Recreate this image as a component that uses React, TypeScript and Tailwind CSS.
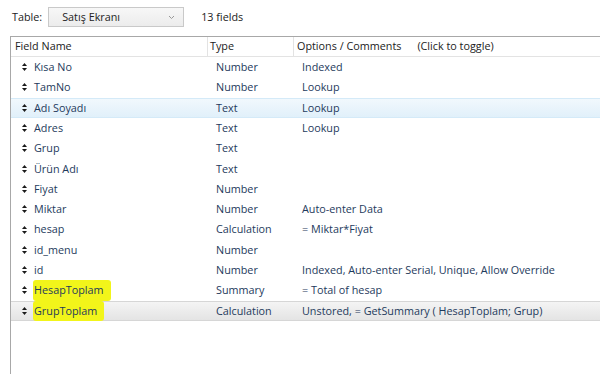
import React from 'react';

interface Field {
  name: string;
  type: string;
  options: string;
  state?: 'hover' | 'selected';
  mark?: boolean;
}

const fields: Field[] = [
  { name: 'Kısa No', type: 'Number', options: 'Indexed' },
  { name: 'TamNo', type: 'Number', options: 'Lookup' },
  { name: 'Adı Soyadı', type: 'Text', options: 'Lookup', state: 'hover' },
  { name: 'Adres', type: 'Text', options: 'Lookup' },
  { name: 'Grup', type: 'Text', options: '' },
  { name: 'Ürün Adı', type: 'Text', options: '' },
  { name: 'Fiyat', type: 'Number', options: '' },
  { name: 'Miktar', type: 'Number', options: 'Auto-enter Data' },
  { name: 'hesap', type: 'Calculation', options: '= Miktar*Fiyat' },
  { name: 'id_menu', type: 'Number', options: '' },
  { name: 'id', type: 'Number', options: 'Indexed, Auto-enter Serial, Unique, Allow Override' },
  { name: 'HesapToplam', type: 'Summary', options: '= Total of hesap', mark: true },
  { name: 'GrupToplam', type: 'Calculation', options: 'Unstored, = GetSummary ( HesapToplam; Grup)', state: 'selected', mark: true },
];

/** Small up/down drag handle shown before each field */
function Handle() {
  return (
    <svg width="5" height="8" viewBox="0 0 5 8" className="shrink-0">
      <path d="M2.5 0 L5 3 L0 3 Z" fill="#1a1a1a" />
      <path d="M0 5 L5 5 L2.5 8 Z" fill="#1a1a1a" />
    </svg>
  );
}

export default function App() {
  return (
    <div
      className="w-[600px] h-[374px] bg-white overflow-hidden text-[10.8px] text-[#1e3a5c]"
      style={{ fontFamily: '"Open Sans", "Noto Sans", sans-serif' }}
    >
      {/* Toolbar */}
      <div className="flex items-center h-[36px] pl-[12px] pb-[2px] text-[#222]">
        <span>Table:</span>
        <div className="ml-[6px] w-[136px] h-[20px] border border-[#c9c9c9] bg-gradient-to-b from-[#f7f7f7] to-[#ececec] flex items-center pl-[13px] pr-[8px]">
          <span className="flex-1">Satış Ekranı</span>
          <svg width="7" height="5" viewBox="0 0 7 5">
            <path d="M1 1 L3.5 3.5 L6 1" stroke="#999" strokeWidth="1" fill="none" />
          </svg>
        </div>
        <span className="ml-[17px]">13 fields</span>
      </div>

      {/* Field list */}
      <div className="ml-[10px] h-[338px] border-l border-t border-[#a8a8a8]">
        <div className="flex h-[20px] items-center border-b border-[#e3e3e3] text-[#222]">
          <div className="w-[197px] pl-[4px] border-r border-[#e3e3e3] h-full flex items-center">Field Name</div>
          <div className="w-[86px] pl-[2px] border-r border-[#e3e3e3] h-full flex items-center">Type</div>
          <div className="pl-[3px] flex items-center gap-[16px]">
            <span>Options / Comments</span>
            <span>(Click to toggle)</span>
          </div>
        </div>
        <div>
          {fields.map((f) => (
            <div
              key={f.name}
              className={
                'flex items-center h-[20.3px] border-y ' +
                (f.state === 'hover'
                  ? 'bg-gradient-to-b from-[#f1f8fd] to-[#e1f0fa] border-[#d4eaf8]'
                  : f.state === 'selected'
                    ? 'bg-gradient-to-b from-[#f4f4f4] to-[#e4e4e4] border-[#d6d6d6]'
                    : 'border-transparent')
              }
            >
              <div className="w-[197px] flex items-center pl-[11px] gap-[7px]">
                <Handle />
                <span className={f.mark ? 'bg-[#f2f51a] pl-[1px] pr-[7px] -ml-[1px] py-[2px] rounded-[3px]' : ''}>{f.name}</span>
              </div>
              <div className="w-[86px] pl-[8px]">{f.type}</div>
              <div className="pl-[8px] whitespace-nowrap">{f.options}</div>
            </div>
          ))}
        </div>
      </div>
    </div>
  );
}
